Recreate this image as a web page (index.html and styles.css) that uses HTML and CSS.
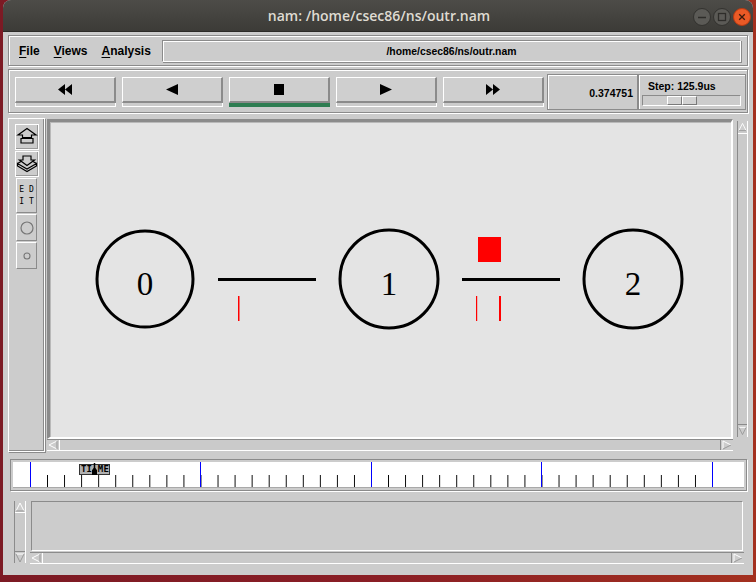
FILE: index.html
```html
<!DOCTYPE html>
<html>
<head>
<meta charset="utf-8">
<title>nam</title>
<link rel="stylesheet" href="styles.css">
</head>
<body>
<div class="window">
  <div class="titlebar">
    <span></span>
    <span class="title">nam: /home/csec86/ns/outr.nam</span>
    <div class="wbtns">
      <svg class="wb" width="18" height="18" viewBox="0 0 18 18"><circle cx="9" cy="9" r="8.5" fill="#5b5a56" stroke="#33322f"/><path d="M5 9.5h8" stroke="#2e2d2a" stroke-width="1.6"/></svg>
      <svg class="wb" width="18" height="18" viewBox="0 0 18 18"><circle cx="9" cy="9" r="8.5" fill="#5b5a56" stroke="#33322f"/><rect x="5.5" y="5.5" width="7" height="7" fill="none" stroke="#2e2d2a" stroke-width="1.3"/></svg>
      <svg class="wb" width="18" height="18" viewBox="0 0 18 18"><circle cx="9" cy="9" r="8.5" fill="#ea5a26" stroke="#b83a12"/><path d="M6.2 6.2l5.6 5.6M11.8 6.2l-5.6 5.6" stroke="#3a1a0c" stroke-width="1.3"/></svg>
    </div>
  </div>

  <div class="content">
    <div class="menubar">
      <span class="menu"><u>F</u>ile</span>
      <span class="menu"><u>V</u>iews</span>
      <span class="menu"><u>A</u>nalysis</span>
      <div class="filefield">/home/csec86/ns/outr.nam</div>
    </div>

    <div class="controls">
      <div class="ctl">
        <div class="btn"><svg width="14" height="11" viewBox="0 0 14 11"><path d="M7 0L0 5.5L7 11ZM14 0L7 5.5L14 11Z" fill="#000"/></svg></div>
        <div class="ind"></div>
      </div>
      <div class="ctl">
        <div class="btn"><svg width="12" height="11" viewBox="0 0 12 11"><path d="M12 0L0 5.5L12 11Z" fill="#000"/></svg></div>
        <div class="ind"></div>
      </div>
      <div class="ctl">
        <div class="btn"><svg width="10" height="11" viewBox="0 0 10 11"><rect x="0" y="0" width="10" height="11" fill="#000"/></svg></div>
        <div class="ind active"></div>
      </div>
      <div class="ctl">
        <div class="btn"><svg width="12" height="11" viewBox="0 0 12 11"><path d="M0 0L12 5.5L0 11Z" fill="#000"/></svg></div>
        <div class="ind"></div>
      </div>
      <div class="ctl last">
        <div class="btn"><svg width="14" height="11" viewBox="0 0 14 11"><path d="M0 0L7 5.5L0 11ZM7 0L14 5.5L7 11Z" fill="#000"/></svg></div>
        <div class="ind"></div>
      </div>
      <div class="timebox">0.374751</div>
      <div class="stepbox">
        <div class="steplabel">Step: 125.9us</div>
        <div class="slider"><div class="thumb"><span class="thumbhalf"></span><span class="thumbhalf"></span></div></div>
      </div>
    </div>

    <div class="mainrow">
      <div class="toolbar">
        <div class="tbtn big">
          <svg width="22" height="20" viewBox="0 0 22 20"><path d="M11 1.5L20 8H15.5V10.5H6.5V8H2Z" fill="none" stroke="#000" stroke-width="1.2"/><path d="M5 11.5H17V16H5Z" fill="none" stroke="#000" stroke-width="1.2"/></svg>
        </div>
        <div class="tbtn big">
          <svg width="22" height="20" viewBox="0 0 22 20"><path d="M7 2H15V6H18.5L11 11.5L3.5 6H7Z" fill="none" stroke="#000" stroke-width="1.2"/><path d="M1.5 9.5L5 7.5M20.5 9.5L17 7.5M1.5 9.5V12L11 17.5L20.5 12V9.5L11 15Z" fill="none" stroke="#000" stroke-width="1.2"/></svg>
        </div>
        <div class="tbtn edit"><span>E D</span><span>I T</span></div>
        <div class="tbtn circ"><svg width="14" height="14" viewBox="0 0 14 14"><circle cx="7" cy="7" r="6" fill="none" stroke="#777" stroke-width="1.2"/></svg></div>
        <div class="tbtn circ"><svg width="8" height="8" viewBox="0 0 8 8"><circle cx="4" cy="4" r="3" fill="none" stroke="#777" stroke-width="1.1"/></svg></div>
      </div>

      <div class="canvaswrap">
        <div class="canvas">
          <svg width="681" height="315" viewBox="50 123 681 315">
            <circle cx="145" cy="280" r="48" fill="none" stroke="#000" stroke-width="3"/>
            <circle cx="389" cy="280" r="49" fill="none" stroke="#000" stroke-width="3"/>
            <circle cx="633" cy="280" r="49" fill="none" stroke="#000" stroke-width="3"/>
            <text x="145" y="296" class="nodelabel">0</text>
            <text x="389" y="296" class="nodelabel">1</text>
            <text x="633" y="296" class="nodelabel">2</text>
            <rect x="218" y="279" width="98" height="3" fill="#000"/>
            <rect x="462" y="279" width="98" height="3" fill="#000"/>
            <rect x="238" y="297" width="1.5" height="25" fill="#f00"/>
            <rect x="476" y="297" width="1.2" height="25" fill="#f00"/>
            <rect x="499" y="297" width="2" height="25" fill="#f00"/>
            <rect x="478" y="238" width="23" height="25" fill="#f00"/>
          </svg>
        </div>
        <div class="hscroll">
          <div class="arrow"><svg width="10" height="10" viewBox="0 0 10 10"><path d="M9 1L1 5L9 9" fill="none" stroke="#fff"/><path d="M9 1V9" stroke="#999"/></svg></div>
          <div class="trough"></div>
          <div class="arrow"><svg width="10" height="10" viewBox="0 0 10 10"><path d="M1 9V1L9 5" fill="none" stroke="#fff"/><path d="M9 5L1 9" stroke="#999"/></svg></div>
        </div>
      </div>

      <div class="vscroll">
        <div class="varrow"><svg width="10" height="10" viewBox="0 0 10 10"><path d="M1 9L5 1L9 9" fill="none" stroke="#fff"/><path d="M1 9H9" stroke="#999"/></svg></div>
        <div class="vtrough"></div>
        <div class="varrow"><svg width="10" height="10" viewBox="0 0 10 10"><path d="M1 1H9" stroke="#fff"/><path d="M1 1L5 9L9 1" fill="none" stroke="#999"/></svg></div>
      </div>
    </div>

    <div class="timeline">
      <div class="ticks">
        <svg width="731" height="25" viewBox="0 0 731 25">
          <defs>
            <pattern id="tk" x="17" y="0" width="17.05" height="25" patternUnits="userSpaceOnUse">
              <rect x="0" y="13" width="1" height="12" fill="#000"/>
            </pattern>
          </defs>
          <rect x="17" y="0" width="682" height="25" fill="url(#tk)"/>
          <rect x="17" y="0" width="1" height="25" fill="#0000ff"/>
          <rect x="187" y="0" width="1" height="25" fill="#0000ff"/>
          <rect x="358" y="0" width="1" height="25" fill="#0000ff"/>
          <rect x="528" y="0" width="1" height="25" fill="#0000ff"/>
          <rect x="699" y="0" width="1" height="25" fill="#0000ff"/>
        </svg>
        <div class="timelabel">TI&nbsp;ME</div>
        <div class="timeptr"></div>
      </div>
    </div>

    <div class="bottom">
      <div class="bvscroll">
        <div class="varrow"><svg width="10" height="10" viewBox="0 0 10 10"><path d="M1 9L5 1L9 9" fill="none" stroke="#fff"/><path d="M1 9H9" stroke="#999"/></svg></div>
        <div class="vtrough"></div>
        <div class="varrow"><svg width="10" height="10" viewBox="0 0 10 10"><path d="M1 1H9" stroke="#fff"/><path d="M1 1L5 9L9 1" fill="none" stroke="#999"/></svg></div>
      </div>
      <div class="bright">
        <div class="textarea"></div>
        <div class="hscroll">
          <div class="arrow"><svg width="10" height="10" viewBox="0 0 10 10"><path d="M9 1L1 5L9 9" fill="none" stroke="#fff"/><path d="M9 1V9" stroke="#999"/></svg></div>
          <div class="trough"></div>
          <div class="arrow"><svg width="10" height="10" viewBox="0 0 10 10"><path d="M1 9V1L9 5" fill="none" stroke="#fff"/><path d="M9 5L1 9" stroke="#999"/></svg></div>
        </div>
      </div>
    </div>
  </div>
</div>
</body>
</html>
```

FILE: styles.css
```css
* { box-sizing: border-box; }
html, body { margin: 0; height: 100%; }
body {
  background: linear-gradient(90deg, #7c1a24 0%, #8a1e25 50%, #a3301f 100%);
  overflow: hidden;
  font-family: "Liberation Sans", Arial, sans-serif;
}
.window {
  margin-left: 3px;
  width: 750px;
  height: 575px;
  background: #cccccc;
  border-radius: 8px 8px 0 0;
  overflow: hidden;
  display: flex;
  flex-direction: column;
}
.titlebar {
  height: 32px;
  flex: none;
  background: linear-gradient(#4d4c48, #3c3b37);
  border-bottom: 1px solid #2c2b28;
  display: grid;
  grid-template-columns: 1fr auto 1fr;
  align-items: center;
}
.title {
  color: #dfdbd2;
  font-family: "Open Sans", "Noto Sans", sans-serif;
  font-weight: 600;
  font-size: 14px;
  padding-left: 2px;
}
.wbtns {
  justify-self: end;
  display: flex;
  gap: 2px;
  margin-right: 2px;
  margin-top: 2px;
}
.wb { display: block; }

.content {
  flex: 1;
  display: flex;
  flex-direction: column;
  padding: 0 5px;
}

/* menu bar */
.menubar {
  margin-top: 3px;
  height: 31px;
  flex: none;
  display: flex;
  align-items: center;
  border: 1px solid #8b8b8b;
  box-shadow: inset 1px 1px 0 #fff, 1px 1px 0 #fff;
  padding-left: 10px;
  padding-top: 1px;
}
.menu {
  font-weight: bold;
  font-size: 12px;
  color: #000;
  margin-right: 14px;
}
.menu:nth-child(3) { margin-right: 11px; }
.menu u { text-decoration-thickness: 1px; text-underline-offset: 2px; }
.filefield {
  flex: 1;
  height: 22px;
  margin-right: 6px;
  border-top: 1px solid #8b8b8b;
  border-left: 1px solid #8b8b8b;
  border-bottom: 1px solid #fff;
  border-right: 1px solid #fff;
  box-shadow: inset 1px 1px 0 #fff, 1px 1px 0 #8b8b8b;
  display: flex;
  align-items: center;
  justify-content: center;
  font-weight: bold;
  font-size: 10.4px;
  color: #000;
}

/* controls */
.controls {
  margin-top: 3px;
  height: 44px;
  flex: none;
  display: flex;
  align-items: flex-start;
  border: 1px solid #8b8b8b;
  box-shadow: inset 1px 1px 0 #fff, 1px 1px 0 #fff;
  padding: 7px 0 0 6px;
}
.ctl {
  width: 101px;
  margin-right: 6px;
  display: flex;
  flex-direction: column;
}
.ctl.last { margin-right: 3px; }
.btn {
  height: 26px;
  border-top: 1px solid #fff;
  border-left: 1px solid #fff;
  border-right: 2px solid #8b8b8b;
  border-bottom: 2px solid #8b8b8b;
  background: #cfcfcf;
  display: flex;
  align-items: center;
  justify-content: center;
}
.btn svg { display: block; }
.ind {
  height: 4px;
  border: 1px solid #fff;
  border-top: none;
  background: #cccccc;
}
.ind.active {
  background: #2e7d52;
  border-color: #2e7d52;
}
.timebox {
  width: 91px;
  height: 36px;
  margin-top: -3px;
  border: 1px solid #8b8b8b;
  box-shadow: inset 1px 1px 0 #fff;
  display: flex;
  align-items: center;
  justify-content: flex-end;
  padding: 0 4px 0 0;
  font-weight: bold;
  font-size: 10.5px;
  color: #000;
  padding-top: 1px;
}
.stepbox {
  width: 108px;
  height: 36px;
  margin-top: -3px;
  border: 1px solid #8b8b8b;
  box-shadow: inset 1px 1px 0 #fff;
  display: flex;
  flex-direction: column;
  padding: 5px 0 0 3px;
}
.steplabel {
  font-weight: bold;
  font-size: 10.5px;
  color: #000;
  padding-left: 6px;
  height: 15px;
  line-height: 12px;
}
.slider {
  width: 99px;
  height: 11px;
  border-top: 1px solid #8b8b8b;
  border-left: 1px solid #8b8b8b;
  border-bottom: 1px solid #fff;
  border-right: 1px solid #fff;
  background: #cccccc;
  display: flex;
  padding-left: 24px;
}
.thumb {
  width: 30px;
  height: 9px;
  display: flex;
}
.thumbhalf {
  flex: 1;
  border-top: 1px solid #fff;
  border-left: 1px solid #fff;
  border-right: 1px solid #7a7a7a;
  border-bottom: 1px solid #7a7a7a;
  background: #d2d2d2;
}

/* main row */
.mainrow {
  margin-top: 5px;
  height: 334px;
  flex: none;
  display: flex;
}
.toolbar {
  width: 37px;
  flex: none;
  border: 1px solid #fff;
  box-shadow: inset -1px -1px 0 #8b8b8b, 1px 1px 0 #8b8b8b;
  display: flex;
  flex-direction: column;
  align-items: center;
  padding-top: 5px;
}
.tbtn {
  border-top: 1px solid #fff;
  border-left: 1px solid #fff;
  border-right: 1px solid #8b8b8b;
  border-bottom: 1px solid #8b8b8b;
  display: flex;
  align-items: center;
  justify-content: center;
}
.tbtn svg { display: block; }
.tbtn.big {
  width: 24px;
  height: 26px;
  border: 1px solid #fff;
  box-shadow: inset -1px -1px 0 #9a9a9a;
  margin-bottom: 1px;
}
.tbtn.edit {
  width: 21px;
  height: 35px;
  flex-direction: column;
  font-family: "DejaVu Sans Mono", monospace;
  font-size: 8px;
  line-height: 12px;
  color: #000;
  white-space: pre;
}
.tbtn.circ {
  width: 21px;
  height: 27px;
  margin-top: 1px;
}

.canvaswrap {
  width: 686px;
  margin-left: 2px;
  margin-top: 1px;
  display: flex;
  flex-direction: column;
}
.canvas {
  height: 320px;
  border-top: 3px solid #8b8b8b;
  border-left: 3px solid #8b8b8b;
  border-right: 2px solid #fff;
  border-bottom: 2px solid #fff;
  background: #e4e4e4;
  box-shadow: inset 1px 1px 0 #b9b9b9;
  overflow: hidden;
}
.canvas svg { display: block; }
.nodelabel {
  font-family: "Liberation Serif", "Times New Roman", serif;
  font-size: 33px;
  text-anchor: middle;
  fill: #000;
}
.hscroll {
  height: 12px;
  flex: none;
  display: flex;
  border-top: 1px solid #8b8b8b;
  border-bottom: 1px solid #fff;
  background: #c9c9c9;
}
.arrow {
  width: 12px;
  display: flex;
  align-items: center;
  justify-content: center;
  background: #cccccc;
}
.arrow svg, .varrow svg { display: block; }
.trough {
  flex: 1;
  border-left: 1px solid #fff;
  border-right: 1px solid #8b8b8b;
  background: #cacaca;
}
.vscroll {
  width: 11px;
  margin-left: 4px;
  margin-top: 3px;
  height: 316px;
  display: flex;
  flex-direction: column;
  border-left: 1px solid #8b8b8b;
  border-right: 1px solid #fff;
  background: #c9c9c9;
}
.varrow {
  height: 12px;
  display: flex;
  align-items: center;
  justify-content: center;
  background: #cccccc;
  flex: none;
}
.vtrough {
  flex: 1;
  border-top: 1px solid #fff;
  border-bottom: 1px solid #8b8b8b;
  background: #cacaca;
}

/* timeline */
.timeline {
  margin: 7px 1px 0 2px;
  height: 32px;
  flex: none;
  border: 1px solid #8b8b8b;
  box-shadow: 1px 1px 0 #fff;
  padding: 2px 2px 3px 2px;
}
.ticks {
  position: relative;
  height: 25px;
  background: #fff;
  box-shadow: 0 1px 0 #a9a9a9;
}
.ticks svg { display: block; shape-rendering: crispEdges; }
.timelabel {
  position: absolute;
  left: 66px;
  top: 2px;
  width: 31px;
  height: 11px;
  background: #b0b0b0;
  border: 1px solid #333;
  font-family: "DejaVu Sans Mono", monospace;
  font-weight: bold;
  font-size: 9px;
  line-height: 9px;
  letter-spacing: 0.2px;
  color: #000;
  padding-left: 1px;
  white-space: pre;
}
.timeptr {
  position: absolute;
  left: 79px;
  top: 1px;
  width: 5px;
  height: 12px;
  background: #000;
  clip-path: polygon(35% 0, 65% 0, 65% 40%, 100% 60%, 100% 100%, 0 100%, 0 60%, 35% 40%);
}

/* bottom panel */
.bottom {
  margin-top: 10px;
  display: flex;
  padding-left: 6px;
}
.bvscroll {
  width: 12px;
  height: 62px;
  display: flex;
  flex-direction: column;
  border-left: 1px solid #8b8b8b;
  border-right: 1px solid #fff;
  background: #c9c9c9;
}
.bvscroll .varrow { height: 11px; }
.bright {
  width: 714px;
  margin-left: 4px;
  display: flex;
  flex-direction: column;
}
.textarea {
  height: 50px;
  margin: 0 1px;
  border-top: 1px solid #8b8b8b;
  border-left: 1px solid #8b8b8b;
  border-bottom: 1px solid #fff;
  border-right: 1px solid #fff;
  background: #cccccc;
}
.bright .hscroll { margin-top: 1px; }
```
